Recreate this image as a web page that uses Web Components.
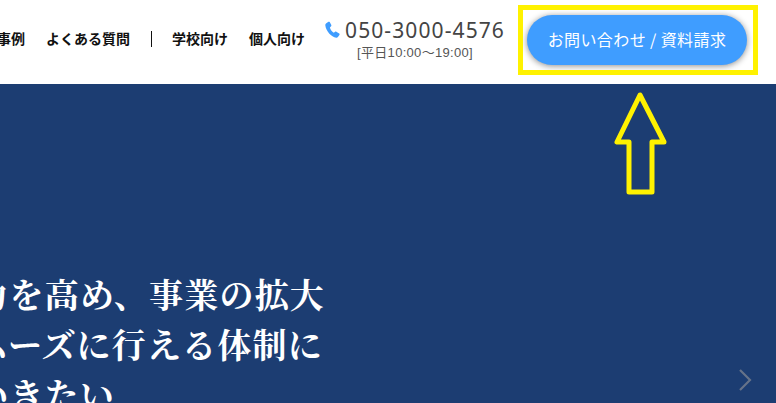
<!DOCTYPE html>
<html lang="ja">
<head>
<meta charset="utf-8">
<title>お問い合わせ</title>
<style>
    html, body { margin: 0; padding: 0; height: 100%; overflow: hidden; background: #fff; }
    body { font-family: "Noto Sans CJK JP", "Noto Sans", sans-serif; }
</style>
</head>
<body>
<site-header>
    <site-nav>
        <nav-link>導入事例</nav-link>
        <nav-link>よくある質問</nav-link>
        <nav-sep></nav-sep>
        <nav-link>学校向け</nav-link>
        <nav-link>個人向け</nav-link>
    </site-nav>
    <phone-contact number="050-3000-4576" hours="[平日10:00〜19:00]"></phone-contact>
    <cta-button>お問い合わせ / 資料請求</cta-button>
</site-header>
<hero-banner>
    <span>競争力を高め、事業の拡大</span>
    <span>をスムーズに行える体制に</span>
    <span>していきたい</span>
</hero-banner>
<highlight-marks></highlight-marks>

<script>
    function define(name, html) {
        const template = document.createElement("template");
        template.innerHTML = html;
        customElements.define(name, class extends HTMLElement {
            constructor() {
                super();
                this.attachShadow({mode: 'open'});
                this.shadowRoot.appendChild(template.content.cloneNode(true));
            }
        });
    }

    define("site-header", `
        <style>
            :host {
                display: flex;
                justify-content: flex-end;
                align-items: center;
                box-sizing: border-box;
                height: 84px;
                padding-right: 29px;
                padding-bottom: 4px;
                background: #fff;
                overflow: hidden;
            }
        </style>
        <slot></slot>
    `);

    define("site-nav", `
        <style>
            :host {
                display: flex;
                flex-shrink: 0;
                align-items: center;
                gap: 21px;
                margin-right: 20px;
                margin-bottom: 4px;
            }
        </style>
        <slot></slot>
    `);

    define("nav-link", `
        <style>
            :host {
                display: block;
                font-size: 14px;
                font-weight: 700;
                line-height: 20px;
                color: #111;
                white-space: nowrap;
            }
        </style>
        <slot></slot>
    `);

    define("nav-sep", `
        <style>
            :host { display: block; width: 1px; height: 16px; margin: 2px -1px 0 0; background: #111; }
        </style>
    `);

    define("cta-button", `
        <style>
            :host {
                display: flex;
                flex-shrink: 0;
                align-items: center;
                justify-content: center;
                box-sizing: border-box;
                width: 220px;
                height: 50px;
                margin-left: 22px;
                padding-bottom: 3px;
                border-radius: 25px;
                background: #3f9dff;
                box-shadow: 0 1px 6px rgba(0, 0, 0, .45);
                color: #fff;
                font-size: 16px;
                letter-spacing: .4px;
                white-space: nowrap;
            }
        </style>
        <slot></slot>
    `);

    class PhoneContact extends HTMLElement {
        constructor() {
            super();
            this.attachShadow({mode: 'open'});
            this.shadowRoot.innerHTML = `
                <style>
                    :host {
                        display: flex;
                        flex-direction: column;
                        flex-shrink: 0;
                        align-items: center;
                        padding-bottom: 3px;
                        color: #444;
                        white-space: nowrap;
                    }
                    .tel { display: flex; align-items: center; gap: 4px; height: 26px; }
                    svg { width: 16px; height: 17px; }
                    .num { font-family: "Noto Sans", sans-serif; font-size: 21px; letter-spacing: 1.1px; line-height: 26px; }
                    .hours { margin-top: 2px; font-family: "Liberation Sans", "Noto Sans CJK JP", sans-serif; font-size: 13px; letter-spacing: .3px; line-height: 16px; color: #555; }
                </style>
                <div class="tel">
                    <svg viewBox="0 0 16 17"><path fill="#3f9dff" d="M1 2.6 3.4.8c.5-.3 1-.2 1.3.3l1.6 3c.2.4.1.9-.2 1.2L4.9 6.4c.4 2.100 2 4.200 3.900 5.300l1.300-1c.4-.3.9-.3 1.200 0l2.900 1.900c.5.300.5.900.200 1.300l-1.500 2.200c-.4.500-1 .800-1.700.700C6.400 15.900.9 10 .3 4.200.2 3.500.5 3 1 2.600Z"/></svg>
                    <span class="num">${this.getAttribute("number")}</span>
                </div>
                <div class="hours">${this.getAttribute("hours")}</div>
            `;
        }
    }
    customElements.define("phone-contact", PhoneContact);

    define("hero-banner", `
        <style>
            :host {
                display: flex;
                flex-direction: column;
                align-items: flex-start;
                height: 319px;
                box-sizing: border-box;
                padding-top: 185px;
                background: #1c3d72;
                color: #fff;
                font-family: "Noto Serif CJK JP", "Noto Sans CJK JP", serif;
                font-size: 34px;
                font-weight: 700;
                letter-spacing: 1.2px;
                line-height: 50px;
                white-space: nowrap;
                overflow: hidden;
            }
            .lines { margin-left: -96px; }
            ::slotted(span) { display: block; }
        </style>
        <div class="lines"><slot></slot></div>
    `);

    // the yellow review marks and the slider arrow lie over the page
    define("highlight-marks", `
        <style>
            :host { display: block; position: absolute; inset: 0; pointer-events: none; }
            .frame {
                position: absolute;
                left: 518px;
                top: 5px;
                width: 240px;
                height: 70px;
                box-sizing: border-box;
                border: 5px solid #fff200;
            }
            svg { position: absolute; left: 0; top: 0; }
        </style>
        <div class="frame"></div>
        <svg width="776" height="403" fill="none">
            <path d="M640 95 617 142H629V192H652V142H664Z" stroke="#fff200" stroke-width="5" stroke-linejoin="round"/>
            <path d="M740 370 750 380 740 390" stroke="#667389" stroke-width="2.200"/>
        </svg>
    `);
</script>
</body>
</html>
